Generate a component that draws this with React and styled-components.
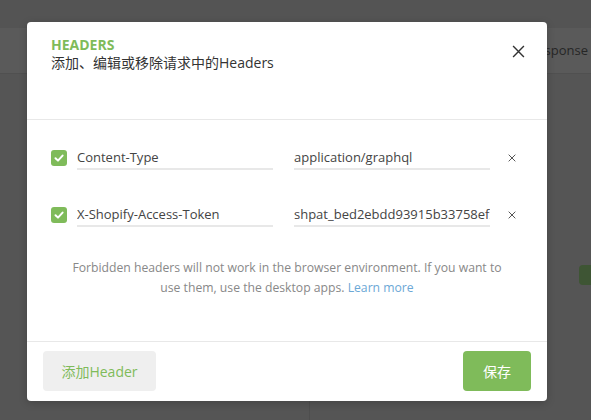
import React from "react";
import styled, {createGlobalStyle} from "styled-components";


const GlobalStyle = createGlobalStyle`
  * {
    box-sizing: border-box;
  }

  html, body {
    margin: 0;
    padding: 0;
    background: #555555;
  }

  body {
    font-family: "Open Sans", "Noto Sans CJK SC", sans-serif;
  }
`;

const GREEN = "#7fbb5a";


const Page = styled.div`
  position: relative;
  width: 591px;
  height: 420px;
  overflow: hidden;
  display: flex;
  flex-direction: column;
  background: #555555;
`;


const TopStrip = styled.div`
  height: 28px;
  background: #545454;
`;


const TabBar = styled.div`
  height: 46px;
  background: #5a5a5a;
  border-bottom: 1px solid #505050;
  display: flex;
  align-items: center;
  justify-content: flex-end;
  padding: 0 3px 2px 0;
`;


const TabLabel = styled.span`
  font-size: 13px;
  color: #262626;
`;


const Workspace = styled.div`
  flex: 1;
  display: flex;
`;


const LeftPane = styled.div`
  width: 310px;
  border-right: 1px solid #4e4e4e;
`;


const RightPane = styled.div`
  flex: 1;
  display: flex;
  flex-direction: column;
  align-items: flex-end;
  padding-top: 191px;
`;


const Pill = styled.div`
  width: 20px;
  height: 20px;
  margin-right: -8px;
  border-radius: 4px;
  background: #3e5534;
`;


const Modal = styled.div`
  position: absolute;
  left: 27px;
  top: 22px;
  width: 520px;
  height: 379px;
  background: #fff;
  border-radius: 4px;
  box-shadow: 0 2px 8px rgba(0, 0, 0, 0.2);
  display: flex;
  flex-direction: column;
`;


const ModalHeader = styled.div`
  height: 98px;
  padding: 14px 22px 0 24px;
  display: flex;
  justify-content: space-between;
  border-bottom: 1px solid #e8e8e8;
`;


const ModalTitle = styled.h2`
  margin: 0;
  font-size: 14px;
  line-height: 18px;
  font-weight: 700;
  color: ${GREEN};
`;


const ModalSubtitle = styled.p`
  margin: 0;
  font-size: 14px;
  line-height: 18px;
  color: #333;
`;


const CloseButton = styled.button`
  margin-top: 9px;
  width: 13px;
  height: 13px;
  padding: 0;
  border: none;
  background: none;
  display: flex;
  cursor: pointer;
`;


const ModalBody = styled.div`
  flex: 1;
  padding: 26px 24px 0;
  display: flex;
  flex-direction: column;
`;


const HeaderRow = styled.div`
  height: 24px;
  display: flex;
  align-items: center;
  margin-bottom: 33px;
`;


const Checkbox = styled.span`
  width: 16px;
  height: 16px;
  border-radius: 3px;
  background: ${GREEN};
  display: flex;
  align-items: center;
  justify-content: center;
  margin-right: 10px;
  flex-shrink: 0;
`;


const FieldInput = styled.input`
  width: 196px;
  height: 24px;
  padding: 0;
  border: none;
  border-bottom: 2px solid #e8e8e8;
  font-family: "Open Sans", sans-serif;
  font-size: 13px;
  color: #444;
  background: transparent;
  outline: none;
  margin-right: ${props => props.gap || 0}px;
`;


const RemoveButton = styled.button`
  width: 10px;
  height: 10px;
  padding: 0;
  border: none;
  background: none;
  display: flex;
  align-items: center;
  justify-content: center;
  cursor: pointer;
`;


const Notice = styled.p`
  max-width: 436px;
  margin: -2px auto 0;
  text-align: center;
  font-size: 12.2px;
  line-height: 20px;
  color: #888;
`;


const NoticeLink = styled.a`
  color: #6ca8d6;
  text-decoration: none;
`;


const ModalFooter = styled.div`
  height: 60px;
  border-top: 1px solid #e8e8e8;
  padding: 0 16px 1px;
  display: flex;
  align-items: center;
  justify-content: space-between;
`;


const FooterButton = styled.button`
  height: 40px;
  width: ${props => props.width}px;
  border: none;
  border-radius: 4px;
  font-family: "Open Sans", "Noto Sans CJK SC", sans-serif;
  font-size: 14px;
  background: ${props => props.primary ? GREEN : "#efefef"};
  color: ${props => props.primary ? "#fff" : GREEN};
  cursor: pointer;
`;


const headers = [
    {key: "Content-Type", value: "application/graphql"},
    {key: "X-Shopify-Access-Token", value: "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"},
];


const CheckIcon = () => (
    <svg width="12" height="12" viewBox="0 0 12 12">
        <polyline points="2.5,6.2 5,8.6 9.6,3.6" fill="none" stroke="#fff" strokeWidth="2"
                  strokeLinecap="round" strokeLinejoin="round"/>
    </svg>
);


const CrossIcon = ({size, stroke, width}) => (
    <svg width={size} height={size} viewBox="0 0 12 12">
        <path d="M1 1 L11 11 M11 1 L1 11" stroke={stroke} strokeWidth={width} fill="none"/>
    </svg>
);


const App = () => {
    return (
        <Page>
            <GlobalStyle/>
            <TopStrip/>
            <TabBar>
                <TabLabel>Response</TabLabel>
            </TabBar>
            <Workspace>
                <LeftPane/>
                <RightPane>
                    <Pill/>
                </RightPane>
            </Workspace>

            <Modal>
                <ModalHeader>
                    <div>
                        <ModalTitle>HEADERS</ModalTitle>
                        <ModalSubtitle>添加、编辑或移除请求中的Headers</ModalSubtitle>
                    </div>
                    <CloseButton aria-label="close">
                        <CrossIcon size={13} stroke="#333" width={1.3}/>
                    </CloseButton>
                </ModalHeader>

                <ModalBody>
                    {headers.map(header => (
                        <HeaderRow key={header.key}>
                            <Checkbox><CheckIcon/></Checkbox>
                            <FieldInput gap={21} defaultValue={header.key}/>
                            <FieldInput gap={17} defaultValue={header.value}/>
                            <RemoveButton aria-label="remove">
                                <CrossIcon size={8} stroke="#555" width={1.5}/>
                            </RemoveButton>
                        </HeaderRow>
                    ))}
                    <Notice>
                        Forbidden headers will not work in the browser environment. If you want to
                        use them, use the desktop apps. <NoticeLink href="#">Learn more</NoticeLink>
                    </Notice>
                </ModalBody>

                <ModalFooter>
                    <FooterButton width={113}>添加Header</FooterButton>
                    <FooterButton primary width={68}>保存</FooterButton>
                </ModalFooter>
            </Modal>
        </Page>
    );
};


export default App;
